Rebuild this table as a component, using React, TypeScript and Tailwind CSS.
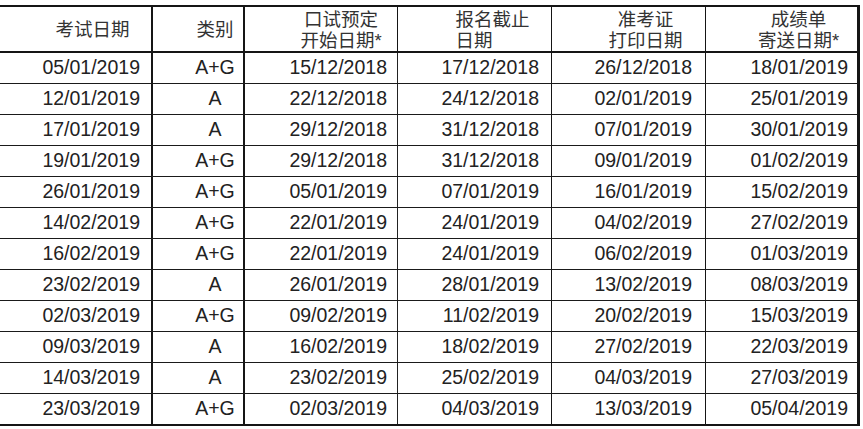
import React from 'react';

const rows: string[][] = [
  ['05/01/2019', 'A+G', '15/12/2018', '17/12/2018', '26/12/2018', '18/01/2019'],
  ['12/01/2019', 'A', '22/12/2018', '24/12/2018', '02/01/2019', '25/01/2019'],
  ['17/01/2019', 'A', '29/12/2018', '31/12/2018', '07/01/2019', '30/01/2019'],
  ['19/01/2019', 'A+G', '29/12/2018', '31/12/2018', '09/01/2019', '01/02/2019'],
  ['26/01/2019', 'A+G', '05/01/2019', '07/01/2019', '16/01/2019', '15/02/2019'],
  ['14/02/2019', 'A+G', '22/01/2019', '24/01/2019', '04/02/2019', '27/02/2019'],
  ['16/02/2019', 'A+G', '22/01/2019', '24/01/2019', '06/02/2019', '01/03/2019'],
  ['23/02/2019', 'A', '26/01/2019', '28/01/2019', '13/02/2019', '08/03/2019'],
  ['02/03/2019', 'A+G', '09/02/2019', '11/02/2019', '20/02/2019', '15/03/2019'],
  ['09/03/2019', 'A', '16/02/2019', '18/02/2019', '27/02/2019', '22/03/2019'],
  ['14/03/2019', 'A', '23/02/2019', '25/02/2019', '04/03/2019', '27/03/2019'],
  ['23/03/2019', 'A+G', '02/03/2019', '04/03/2019', '13/03/2019', '05/04/2019'],
];

// column widths incl. right border
const cols = [
  'w-[153px] border-r-2',
  'w-[92px] border-r-2',
  'w-[153px] border-r',
  'w-[154px] border-r',
  'w-[154px] border-r',
  'w-[151px]',
];

// Latin font first so line boxes stay compact; CJK glyphs fall back
const head = { fontFamily: '"Liberation Sans", "Noto Sans CJK SC", sans-serif' };

function Line({ children }: { children: React.ReactNode }) {
  return <div className="leading-[21px] whitespace-nowrap">{children}</div>;
}

export default function App() {
  return (
    <div className="w-[863px] h-[429px] bg-white pt-[5px] overflow-hidden">
      <div
        className="w-[860px] border-t-2 border-b-2 border-r-[3px] border-[#151515] text-[#222]"
        style={{ fontFamily: '"Liberation Sans", Arial, sans-serif' }}
      >
        {/* header */}
        <div className="flex h-[46px] border-b-2 border-[#151515] text-[18.5px] text-[#333]" style={head}>
          <div className={`${cols[0]} border-[#151515] flex items-center justify-center pl-[34px]`}>
            <Line>考试日期</Line>
          </div>
          <div className={`${cols[1]} border-[#151515] flex items-center justify-center pl-[34px]`}>
            <Line>类别</Line>
          </div>
          <div className={`${cols[2]} border-[#151515] flex flex-col items-center justify-center pl-[40px] pt-[2px]`}>
            <Line>口试预定</Line>
            <Line>开始日期*</Line>
          </div>
          <div className={`${cols[3]} border-[#151515] flex items-center justify-center pl-[36px] pt-[2px]`}>
            <div className="flex flex-col items-start">
              <Line>报名截止</Line>
              <Line>日期</Line>
            </div>
          </div>
          <div className={`${cols[4]} border-[#151515] flex flex-col items-center justify-center pl-[34px] pt-[2px]`}>
            <Line>准考证</Line>
            <Line>打印日期</Line>
          </div>
          <div className={`${cols[5]} flex flex-col items-center justify-center pl-[34px] pt-[2px]`}>
            <Line>成绩单</Line>
            <Line>寄送日期*</Line>
          </div>
        </div>

        {rows.map((r, i) => (
          <div
            key={i}
            className={`flex text-[19.5px] ${i < rows.length - 1 ? 'h-[31px] border-b border-[#1a1a1a]' : 'h-[30px]'}`}
          >
            <div className={`${cols[0]} border-[#151515] flex items-center justify-end pr-[11px]`}>{r[0]}</div>
            <div className={`${cols[1]} border-[#151515] flex items-center justify-center pl-[34px]`}>{r[1]}</div>
            <div className={`${cols[2]} border-[#222] flex items-center justify-end pr-[10px]`}>{r[2]}</div>
            <div className={`${cols[3]} border-[#151515] flex items-center justify-end pr-[12px]`}>{r[3]}</div>
            <div className={`${cols[4]} border-[#151515] flex items-center justify-end pr-[13px]`}>{r[4]}</div>
            <div className={`${cols[5]} flex items-center justify-end pr-[9px]`}>{r[5]}</div>
          </div>
        ))}
      </div>
    </div>
  );
}
